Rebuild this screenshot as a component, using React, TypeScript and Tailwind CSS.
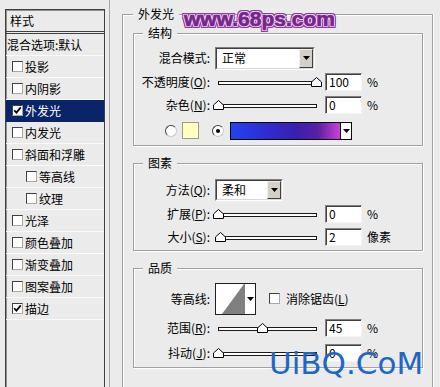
import React from "react";

const BG = "bg-[#ebebeb]";

function CheckBox({ checked }: { checked?: boolean }) {
  return (
    <span className="flex h-[11px] w-[11px] shrink-0 items-center justify-center border border-t-[#404040] border-l-[#404040] border-b-[#a8a8a8] border-r-[#a8a8a8] bg-white">
      {checked && (
        <svg width="9" height="9" viewBox="0 0 9 9">
          <path d="M1.2 4.2 L3.4 6.6 L7.8 1.4" stroke="#000" strokeWidth="1.7" fill="none" />
        </svg>
      )}
    </span>
  );
}

function Radio({ on }: { on?: boolean }) {
  return (
    <span className="flex h-[12px] w-[12px] shrink-0 items-center justify-center rounded-full border border-t-[#404040] border-l-[#404040] border-b-[#c8c8c8] border-r-[#c8c8c8] bg-white">
      {on && <span className="h-[4px] w-[4px] rounded-full bg-black" />}
    </span>
  );
}

function Tri() {
  return (
    <svg width="7" height="4" viewBox="0 0 7 4">
      <path d="M0 0 H7 L3.5 4 Z" fill="#000" />
    </svg>
  );
}

function Field({ v }: { v: string }) {
  return (
    <div className="flex h-[18px] w-[37px] shrink-0 items-center border border-t-[#808080] border-l-[#808080] border-b-[#f4f4f4] border-r-[#f4f4f4] bg-white pl-[3px] leading-none shadow-[inset_1px_1px_0_#404040]">
      {v}
    </div>
  );
}

function Slider({ pos }: { pos: number }) {
  return (
    <div className="relative h-[12px] w-[106px] shrink-0 pl-[3px] pt-[5px]">
      <div className="h-[4px] w-[99px] border border-[#1a1a1a] bg-white" />
      <svg
        className="absolute top-[1px]"
        style={{ left: 3 + pos * 98 - 5 }}
        width="11"
        height="10"
        viewBox="0 0 11 10"
      >
        <path d="M0.5 9.5 V5 L5.5 0.5 L10.5 5 V9.5 Z" fill="#fff" stroke="#000" />
      </svg>
    </div>
  );
}

function Select({ text, className }: { text: string; className: string }) {
  return (
    <div
      className={`flex shrink-0 border border-t-[#808080] border-l-[#808080] border-b-white border-r-white ${className}`}
    >
      <div className="flex flex-1 border border-t-[#404040] border-l-[#404040] border-b-[#d8d8d8] border-r-[#d8d8d8] bg-white">
        <div className="flex flex-1 items-center pl-[5px] leading-none">{text}</div>
        <div className="flex w-[14px] items-center justify-center border border-t-[#f0f0f0] border-l-[#f0f0f0] border-b-[#404040] border-r-[#404040] bg-[#d4d0c8]">
          <Tri />
        </div>
      </div>
    </div>
  );
}

function Group({
  title,
  className,
  legendLeft,
  children,
}: {
  title: string;
  className: string;
  legendLeft: string;
  children?: React.ReactNode;
}) {
  return (
    <div
      className={`relative border border-[#a0a0a0] shadow-[inset_1px_1px_0_#fff,1px_1px_0_#fff] ${className}`}
    >
      <span className={`absolute top-[-8px] ${BG} px-[5px] leading-[14px] ${legendLeft}`}>{title}</span>
      {children}
    </div>
  );
}

function Label({ children }: { children: React.ReactNode }) {
  return <div className="w-[76px] shrink-0 text-right leading-none">{children}</div>;
}

const items: { t: string; checked?: boolean; sel?: boolean; indent?: boolean }[] = [
  { t: "投影" },
  { t: "内阴影" },
  { t: "外发光", checked: true, sel: true },
  { t: "内发光" },
  { t: "斜面和浮雕" },
  { t: "等高线", indent: true },
  { t: "纹理", indent: true },
  { t: "光泽" },
  { t: "颜色叠加" },
  { t: "渐变叠加" },
  { t: "图案叠加" },
  { t: "描边", checked: true },
];

export default function App() {
  return (
    <div
      className={`relative flex h-[387px] w-[440px] overflow-hidden ${BG} font-['Noto_Sans_CJK_SC',sans-serif] text-[12px] text-black`}
    >
      {/* Left style list */}
      <div className="ml-[5px] mt-[9px] flex h-[400px] w-[100px] shrink-0 flex-col self-start border border-b-0 border-[#404040] shadow-[inset_1px_1px_0_#909090]">
        <div className="flex h-[24px] items-center border-b-[3px] border-double border-[#404040] pl-[4px] leading-none">
          样式
        </div>
        <div className="flex h-[22px] items-center border-b border-[#fafafa] pl-[1px] leading-none">
          混合选项:默认
        </div>
        {items.map((it) => (
          <div
            key={it.t}
            className={`flex h-[22px] items-center gap-[2px] border-b leading-none ${
              it.sel ? "border-[#0a246a] bg-[#0a246a] text-white" : "border-[#fafafa]"
            } ${it.indent ? "pl-[20px]" : "pl-[6px]"}`}
          >
            <CheckBox checked={it.checked} />
            <span>{it.t}</span>
          </div>
        ))}
      </div>

      <div className="ml-[4px] w-px shrink-0 self-stretch bg-[#a8a8a8]" />

      {/* Right: outer group */}
      <div className="relative ml-[12px] mt-[14px] h-[400px] w-[311px] shrink-0 self-start border border-b-0 border-[#a0a0a0] pl-[10px] pr-[9px] pt-[18px] shadow-[inset_1px_1px_0_#fff,1px_0_0_#fff]">
        <span className={`absolute left-[10px] top-[-8px] ${BG} px-[5px] leading-[14px]`}>外发光</span>

        <Group title="结构" legendLeft="left-[9px]" className="h-[113px] pt-[12px]">
          <div className="flex h-[24px] items-center">
            <Label>混合模式:</Label>
            <Select text="正常" className="ml-[5px] h-[23px] w-[100px]" />
          </div>
          <div className="flex h-[23px] items-center">
            <Label>
              不透明度(<u>O</u>):
            </Label>
            <div className="ml-[5px]">
              <Slider pos={1} />
            </div>
            <div className="ml-[4px]">
              <Field v="100" />
            </div>
            <span className="ml-[5px] leading-none">%</span>
          </div>
          <div className="flex h-[23px] items-center">
            <Label>
              杂色(<u>N</u>):
            </Label>
            <div className="ml-[5px]">
              <Slider pos={0} />
            </div>
            <div className="ml-[4px]">
              <Field v="0" />
            </div>
            <span className="ml-[5px] leading-none">%</span>
          </div>
          <div className="flex h-[29px] items-center pl-[31px]">
            <Radio />
            <div className="ml-[5px] h-[17px] w-[17px] border border-[#9a9a9a] bg-[#ffffc0]" />
            <div className="ml-[13px]">
              <Radio on />
            </div>
            <div className="ml-[6px] flex h-[18px] w-[122px] border border-black">
              <div className="h-full flex-1 bg-[linear-gradient(to_right,#2343f2,#2f2ad0_35%,#3a1fae_60%,#5a20a4_80%,#cc40d8)]" />
              <div className="flex w-[11px] items-center justify-center border-l border-black bg-white">
                <Tri />
              </div>
            </div>
          </div>
        </Group>

        <Group title="图素" legendLeft="left-[9px]" className="mt-[17px] h-[88px] pt-[14px]">
          <div className="flex h-[24px] items-center">
            <Label>
              方法(<u>Q</u>):
            </Label>
            <Select text="柔和" className="ml-[5px] h-[22px] w-[68px]" />
          </div>
          <div className="flex h-[23px] items-center">
            <Label>
              扩展(<u>P</u>):
            </Label>
            <div className="ml-[5px]">
              <Slider pos={0} />
            </div>
            <div className="ml-[4px]">
              <Field v="0" />
            </div>
            <span className="ml-[5px] leading-none">%</span>
          </div>
          <div className="flex h-[23px] items-center">
            <Label>
              大小(<u>S</u>):
            </Label>
            <div className="ml-[5px]">
              <Slider pos={0.02} />
            </div>
            <div className="ml-[4px]">
              <Field v="2" />
            </div>
            <span className="ml-[5px] leading-none">像素</span>
          </div>
        </Group>

        <Group title="品质" legendLeft="left-[9px]" className="mt-[17px] h-[100px] pt-[13px]">
          <div className="flex h-[33px] items-center">
            <Label>等高线:</Label>
            <div className="ml-[5px] flex h-[32px] w-[41px] shrink-0 border border-[#202020] bg-white">
              <svg width="29" height="30" viewBox="0 0 29 30">
                <polygon points="6,30 28,0 29,0 29,30" fill="#808080" />
              </svg>
              <div className="flex flex-1 items-center justify-center">
                <Tri />
              </div>
            </div>
            <div className="ml-[13px]">
              <CheckBox />
            </div>
            <span className="ml-[6px] leading-none">
              消除锯齿(<u>L</u>)
            </span>
          </div>
          <div className="flex h-[26px] items-center">
            <Label>
              范围(<u>R</u>):
            </Label>
            <div className="ml-[5px]">
              <Slider pos={0.45} />
            </div>
            <div className="ml-[4px]">
              <Field v="45" />
            </div>
            <span className="ml-[5px] leading-none">%</span>
          </div>
          <div className="flex h-[23px] items-center">
            <Label>
              抖动(<u>J</u>):
            </Label>
            <div className="ml-[5px]">
              <Slider pos={0} />
            </div>
            <div className="ml-[4px]">
              <Field v="0" />
            </div>
            <span className="ml-[5px] leading-none">%</span>
          </div>
        </Group>
      </div>

      {/* Watermarks */}
      <div className="pointer-events-none absolute left-[184px] top-[5px] font-['Liberation_Sans',Arial,sans-serif] text-[21px] font-bold leading-[27px] text-[#74278a] [-webkit-text-stroke:0.7px_#74278a] [text-shadow:1px_0_0_#f4d6f4,-1px_0_0_#f4d6f4,0_1px_0_#f4d6f4,0_-1px_0_#f4d6f4,1px_1px_0_#f4d6f4,-1px_-1px_0_#f4d6f4,1px_-1px_0_#f4d6f4,-1px_1px_0_#f4d6f4,2px_0_0_#8d3aa0,-2px_0_0_#8d3aa0,0_2px_0_#8d3aa0,0_-2px_0_#8d3aa0,2px_2px_0_#8d3aa0,-2px_-2px_0_#8d3aa0,2px_-2px_0_#8d3aa0,-2px_2px_0_#8d3aa0]">
        www.68ps.com
      </div>
      <div className="pointer-events-none absolute left-[269px] top-[348px] font-['DejaVu_Sans',sans-serif] text-[31px] leading-none text-[#1f66c9]">
        UiBQ.CoM
      </div>
    </div>
  );
}
